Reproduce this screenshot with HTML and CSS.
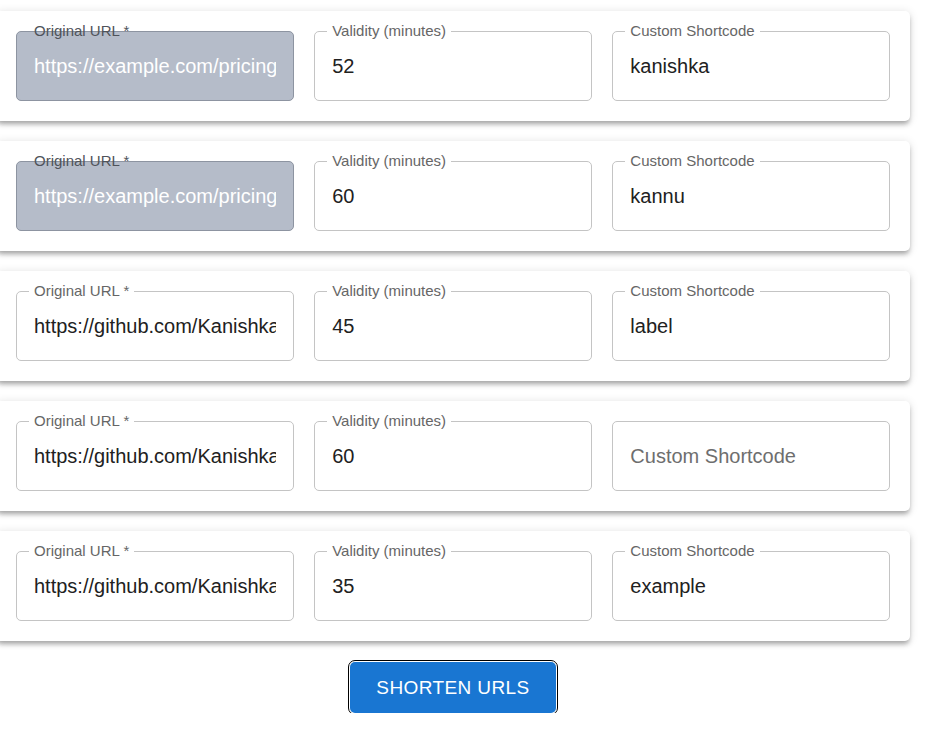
FILE: index.html
```html
<!DOCTYPE html>
<html lang="en">
<head>
<meta charset="utf-8">
<title>URL Shortener</title>
<link rel="stylesheet" href="styles.css">
</head>
<body>
<main class="page">
  <div class="list">
    <section class="card">
      <div class="field field-disabled">
        <span class="label">Original URL *</span>
        <div class="value">https://example.com/pricing</div>
      </div>
      <div class="field">
        <span class="label">Validity (minutes)</span>
        <div class="value">52</div>
      </div>
      <div class="field">
        <span class="label">Custom Shortcode</span>
        <div class="value">kanishka</div>
      </div>
    </section>
    <section class="card">
      <div class="field field-disabled">
        <span class="label">Original URL *</span>
        <div class="value">https://example.com/pricing</div>
      </div>
      <div class="field">
        <span class="label">Validity (minutes)</span>
        <div class="value">60</div>
      </div>
      <div class="field">
        <span class="label">Custom Shortcode</span>
        <div class="value">kannu</div>
      </div>
    </section>
    <section class="card">
      <div class="field">
        <span class="label">Original URL *</span>
        <div class="value">https://github.com/Kanishka</div>
      </div>
      <div class="field">
        <span class="label">Validity (minutes)</span>
        <div class="value">45</div>
      </div>
      <div class="field">
        <span class="label">Custom Shortcode</span>
        <div class="value">label</div>
      </div>
    </section>
    <section class="card">
      <div class="field">
        <span class="label">Original URL *</span>
        <div class="value">https://github.com/Kanishka</div>
      </div>
      <div class="field">
        <span class="label">Validity (minutes)</span>
        <div class="value">60</div>
      </div>
      <div class="field">
        <div class="value placeholder">Custom Shortcode</div>
      </div>
    </section>
    <section class="card">
      <div class="field">
        <span class="label">Original URL *</span>
        <div class="value">https://github.com/Kanishka</div>
      </div>
      <div class="field">
        <span class="label">Validity (minutes)</span>
        <div class="value">35</div>
      </div>
      <div class="field">
        <span class="label">Custom Shortcode</span>
        <div class="value">example</div>
      </div>
    </section>
  </div>
  <div class="actions">
    <button class="btn" type="button">Shorten URLs</button>
  </div>
</main>
</body>
</html>
```

FILE: styles.css
```css
html, body {
  margin: 0;
  padding: 0;
  background: #ffffff;
  font-family: "Liberation Sans", Arial, Helvetica, sans-serif;
}

.page {
  width: 914px;
  margin-left: -4px;
  padding-top: 11px;
}

.list {
  display: flex;
  flex-direction: column;
  gap: 20px;
}

.card {
  display: flex;
  gap: 20.5px;
  padding: 20px;
  background: #ffffff;
  border-radius: 5px;
  box-shadow: 0px 4px 4px -2px rgba(0,0,0,0.2),
              0px 4px 5px 0px rgba(0,0,0,0.14),
              0px 1px 10px 0px rgba(0,0,0,0.12);
}

.field {
  position: relative;
  flex: 1 1 0;
  min-width: 0;
  height: 70px;
  box-sizing: border-box;
  border: 1px solid #c4c4c4;
  border-radius: 5px;
  display: flex;
  align-items: center;
  padding: 0 17px;
}

.label {
  position: absolute;
  top: -10px;
  left: 12px;
  padding: 0 5px;
  font-size: 15px;
  line-height: 17px;
  color: #666666;
  background: #ffffff;
  white-space: nowrap;
}

.value {
  font-size: 20px;
  line-height: 24px;
  color: #212121;
  white-space: nowrap;
  overflow: hidden;
  width: 100%;
}

.placeholder {
  color: #6e6e6e;
}

.field-disabled {
  background: #b5bcc9;
  border-color: #8d94a1;
}

.field-disabled .label {
  background: transparent;
  color: #4f535a;
}

.field-disabled .value {
  color: #ffffff;
}

.actions {
  display: flex;
  justify-content: center;
  padding-top: 21px;
}

.btn {
  width: 206px;
  height: 51px;
  background: #1976d2;
  color: #ffffff;
  border: none;
  border-radius: 5px;
  outline: 1px solid #000000;
  outline-offset: 1px;
  font-family: "Liberation Sans", Arial, Helvetica, sans-serif;
  font-size: 19px;
  text-transform: uppercase;
  letter-spacing: 0.4px;
  padding: 0;
  cursor: pointer;
}
```
